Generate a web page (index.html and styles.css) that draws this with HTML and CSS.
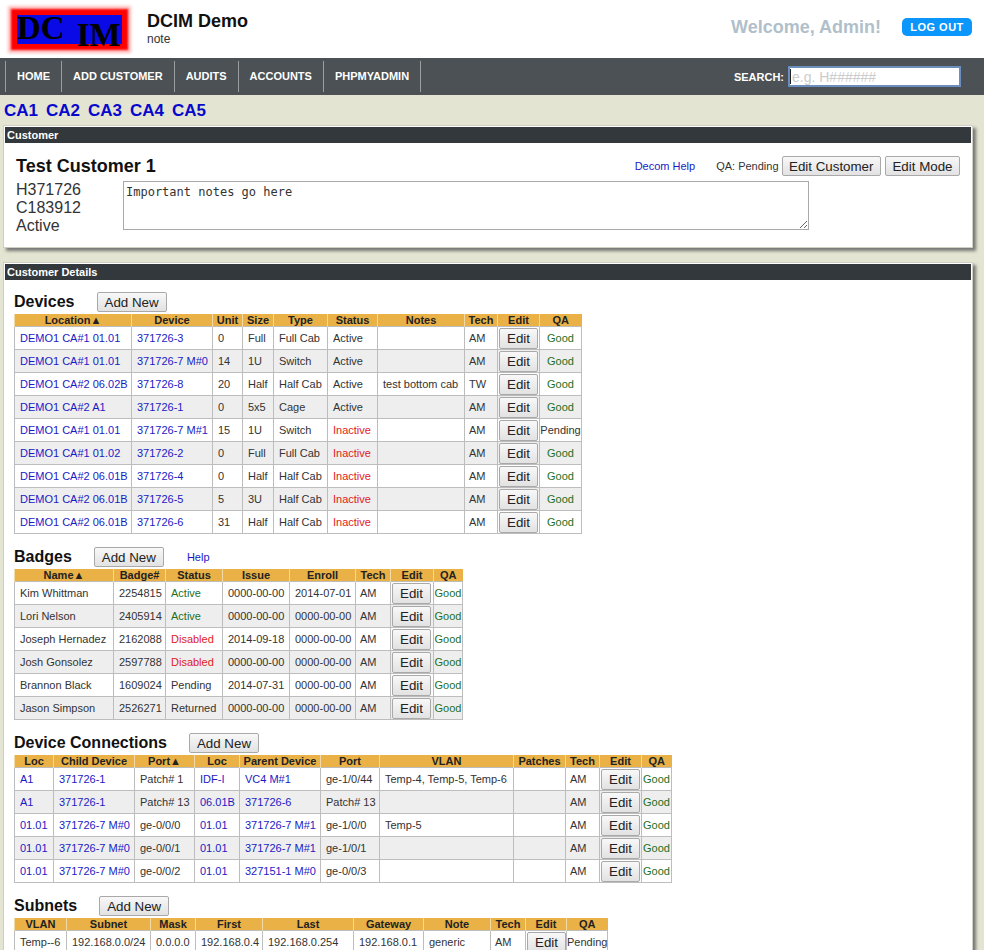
FILE: index.html
```html
<!DOCTYPE html>
<html>
  <head>
    <meta charset="utf-8">
    <title>DCIM Demo</title>
    <link rel="stylesheet" href="styles.css">
  </head>
  <body>
    <header class="top">
      <div class="logo"><span>DC</span><span class="logo-low">IM</span></div>
      <div class="site">
        <h1>DCIM Demo</h1>
        <p>note</p>
      </div>
      <div class="user">
        <span class="welcome">Welcome, Admin!</span>
        <a class="logout" href="#">LOG OUT</a>
      </div>
    </header>

    <nav class="nav">
      <ul>
        <li><a href="#">HOME</a></li>
        <li><a href="#">ADD CUSTOMER</a></li>
        <li><a href="#">AUDITS</a></li>
        <li><a href="#">ACCOUNTS</a></li>
        <li><a href="#">PHPMYADMIN</a></li>
      </ul>
      <form class="search">
        <label for="q">SEARCH:</label>
        <span class="search-box"><input id="q" type="text" placeholder="e.g. H######"></span>
      </form>
    </nav>

    <div class="rooms">
      <a href="#">CA1</a>
      <a href="#">CA2</a>
      <a href="#">CA3</a>
      <a href="#">CA4</a>
      <a href="#">CA5</a>
    </div>

    <section class="panel">
      <div class="panel-title">Customer</div>
      <div class="customer">
        <div class="customer-top">
          <h2>Test Customer 1</h2>
          <a class="decom" href="#">Decom Help</a>
          <span class="qa-state">QA: Pending</span>
          <button>Edit Customer</button>
          <button>Edit Mode</button>
        </div>
        <div class="customer-info">
          <div class="ids">H371726<br>C183912<br>Active</div>
          <textarea>Important notes go here</textarea>
        </div>
      </div>
    </section>

    <section class="panel details">
      <div class="panel-title">Customer Details</div>
      <div class="details-body">

        <div class="block-head">
          <h3>Devices</h3>
          <button>Add New</button>
        </div>
        <table>
          <colgroup>
            <col width="117"><col width="81"><col width="30"><col width="31"><col width="54"><col width="50"><col width="87"><col width="33"><col width="42"><col width="42">
          </colgroup>
          <thead>
            <tr><th>Location▲</th><th>Device</th><th>Unit</th><th>Size</th><th>Type</th><th>Status</th><th>Notes</th><th>Tech</th><th>Edit</th><th>QA</th></tr>
          </thead>
          <tbody>
            <tr><td><a href="#">DEMO1 CA#1 01.01</a></td><td><a href="#">371726-3</a></td><td>0</td><td>Full</td><td>Full Cab</td><td>Active</td><td></td><td>AM</td><td class="act"><button>Edit</button></td><td class="good">Good</td></tr>
            <tr><td><a href="#">DEMO1 CA#1 01.01</a></td><td><a href="#">371726-7 M#0</a></td><td>14</td><td>1U</td><td>Switch</td><td>Active</td><td></td><td>AM</td><td class="act"><button>Edit</button></td><td class="good">Good</td></tr>
            <tr><td><a href="#">DEMO1 CA#2 06.02B</a></td><td><a href="#">371726-8</a></td><td>20</td><td>Half</td><td>Half Cab</td><td>Active</td><td>test bottom cab</td><td>TW</td><td class="act"><button>Edit</button></td><td class="good">Good</td></tr>
            <tr><td><a href="#">DEMO1 CA#2 A1</a></td><td><a href="#">371726-1</a></td><td>0</td><td>5x5</td><td>Cage</td><td>Active</td><td></td><td>AM</td><td class="act"><button>Edit</button></td><td class="good">Good</td></tr>
            <tr><td><a href="#">DEMO1 CA#1 01.01</a></td><td><a href="#">371726-7 M#1</a></td><td>15</td><td>1U</td><td>Switch</td><td class="bad">Inactive</td><td></td><td>AM</td><td class="act"><button>Edit</button></td><td>Pending</td></tr>
            <tr><td><a href="#">DEMO1 CA#1 01.02</a></td><td><a href="#">371726-2</a></td><td>0</td><td>Full</td><td>Full Cab</td><td class="bad">Inactive</td><td></td><td>AM</td><td class="act"><button>Edit</button></td><td class="good">Good</td></tr>
            <tr><td><a href="#">DEMO1 CA#2 06.01B</a></td><td><a href="#">371726-4</a></td><td>0</td><td>Half</td><td>Half Cab</td><td class="bad">Inactive</td><td></td><td>AM</td><td class="act"><button>Edit</button></td><td class="good">Good</td></tr>
            <tr><td><a href="#">DEMO1 CA#2 06.01B</a></td><td><a href="#">371726-5</a></td><td>5</td><td>3U</td><td>Half Cab</td><td class="bad">Inactive</td><td></td><td>AM</td><td class="act"><button>Edit</button></td><td class="good">Good</td></tr>
            <tr><td><a href="#">DEMO1 CA#2 06.01B</a></td><td><a href="#">371726-6</a></td><td>31</td><td>Half</td><td>Half Cab</td><td class="bad">Inactive</td><td></td><td>AM</td><td class="act"><button>Edit</button></td><td class="good">Good</td></tr>
          </tbody>
        </table>

        <div class="block-head">
          <h3>Badges</h3>
          <button>Add New</button>
          <a class="help" href="#">Help</a>
        </div>
        <table>
          <colgroup>
            <col width="99"><col width="52"><col width="57"><col width="67"><col width="66"><col width="35"><col width="43"><col width="29">
          </colgroup>
          <thead>
            <tr><th>Name▲</th><th>Badge#</th><th>Status</th><th>Issue</th><th>Enroll</th><th>Tech</th><th>Edit</th><th>QA</th></tr>
          </thead>
          <tbody>
            <tr><td>Kim Whittman</td><td>2254815</td><td class="good">Active</td><td>0000-00-00</td><td>2014-07-01</td><td>AM</td><td class="act"><button>Edit</button></td><td class="good">Good</td></tr>
            <tr><td>Lori Nelson</td><td>2405914</td><td class="good">Active</td><td>0000-00-00</td><td>0000-00-00</td><td>AM</td><td class="act"><button>Edit</button></td><td class="good">Good</td></tr>
            <tr><td>Joseph Hernadez</td><td>2162088</td><td class="bad">Disabled</td><td>2014-09-18</td><td>0000-00-00</td><td>AM</td><td class="act"><button>Edit</button></td><td class="good">Good</td></tr>
            <tr><td>Josh Gonsolez</td><td>2597788</td><td class="bad">Disabled</td><td>0000-00-00</td><td>0000-00-00</td><td>AM</td><td class="act"><button>Edit</button></td><td class="good">Good</td></tr>
            <tr><td>Brannon Black</td><td>1609024</td><td>Pending</td><td>2014-07-31</td><td>0000-00-00</td><td>AM</td><td class="act"><button>Edit</button></td><td class="good">Good</td></tr>
            <tr><td>Jason Simpson</td><td>2526271</td><td>Returned</td><td>0000-00-00</td><td>0000-00-00</td><td>AM</td><td class="act"><button>Edit</button></td><td class="good">Good</td></tr>
          </tbody>
        </table>

        <div class="block-head">
          <h3>Device Connections</h3>
          <button>Add New</button>
        </div>
        <table>
          <colgroup>
            <col width="39"><col width="81"><col width="60"><col width="45"><col width="81"><col width="59"><col width="134"><col width="52"><col width="34"><col width="42"><col width="30">
          </colgroup>
          <thead>
            <tr><th>Loc</th><th>Child Device</th><th>Port▲</th><th>Loc</th><th>Parent Device</th><th>Port</th><th>VLAN</th><th>Patches</th><th>Tech</th><th>Edit</th><th>QA</th></tr>
          </thead>
          <tbody>
            <tr><td><a href="#">A1</a></td><td><a href="#">371726-1</a></td><td>Patch# 1</td><td><a href="#">IDF-I</a></td><td><a href="#">VC4 M#1</a></td><td>ge-1/0/44</td><td>Temp-4, Temp-5, Temp-6</td><td></td><td>AM</td><td class="act"><button>Edit</button></td><td class="good">Good</td></tr>
            <tr><td><a href="#">A1</a></td><td><a href="#">371726-1</a></td><td>Patch# 13</td><td><a href="#">06.01B</a></td><td><a href="#">371726-6</a></td><td>Patch# 13</td><td></td><td></td><td>AM</td><td class="act"><button>Edit</button></td><td class="good">Good</td></tr>
            <tr><td><a href="#">01.01</a></td><td><a href="#">371726-7 M#0</a></td><td>ge-0/0/0</td><td><a href="#">01.01</a></td><td><a href="#">371726-7 M#1</a></td><td>ge-1/0/0</td><td>Temp-5</td><td></td><td>AM</td><td class="act"><button>Edit</button></td><td class="good">Good</td></tr>
            <tr><td><a href="#">01.01</a></td><td><a href="#">371726-7 M#0</a></td><td>ge-0/0/1</td><td><a href="#">01.01</a></td><td><a href="#">371726-7 M#1</a></td><td>ge-1/0/1</td><td></td><td></td><td>AM</td><td class="act"><button>Edit</button></td><td class="good">Good</td></tr>
            <tr><td><a href="#">01.01</a></td><td><a href="#">371726-7 M#0</a></td><td>ge-0/0/2</td><td><a href="#">01.01</a></td><td><a href="#">327151-1 M#0</a></td><td>ge-0/0/3</td><td></td><td></td><td>AM</td><td class="act"><button>Edit</button></td><td class="good">Good</td></tr>
          </tbody>
        </table>

        <div class="block-head">
          <h3>Subnets</h3>
          <button>Add New</button>
        </div>
        <table>
          <colgroup>
            <col width="52"><col width="84"><col width="45"><col width="67"><col width="91"><col width="70"><col width="67"><col width="35"><col width="41"><col width="41">
          </colgroup>
          <thead>
            <tr><th>VLAN</th><th>Subnet</th><th>Mask</th><th>First</th><th>Last</th><th>Gateway</th><th>Note</th><th>Tech</th><th>Edit</th><th>QA</th></tr>
          </thead>
          <tbody>
            <tr><td>Temp--6</td><td>192.168.0.0/24</td><td>0.0.0.0</td><td>192.168.0.4</td><td>192.168.0.254</td><td>192.168.0.1</td><td>generic</td><td>AM</td><td class="act"><button>Edit</button></td><td>Pending</td></tr>
          </tbody>
        </table>

      </div>
    </section>
  </body>
</html>
```

FILE: styles.css
```css
html, body {
  height: 100%;
  overflow: hidden;
}
body {
  margin: 0;
  background: #e4e4d2;
  font-family: "Liberation Sans", Arial, sans-serif;
  font-size: 11px;
  color: #333;
}
a {
  color: #1a1ac4;
  text-decoration: none;
}
button {
  height: 20px;
  padding: 0 7px;
  border: 1px solid #a9a9a9;
  border-radius: 2px;
  background: linear-gradient(#f8f8f8, #e2e2e2);
  font-family: "Liberation Sans", Arial, sans-serif;
  font-size: 13.33px;
  color: #222;
}

/* header */
.top {
  display: flex;
  height: 58px;
  padding: 15px 12px 0 17px;
  box-sizing: border-box;
  background: #fff;
}
.logo {
  display: flex;
  gap: 12px;
  width: 105px;
  height: 29px;
  background: #0a0ae6;
  box-shadow: 0 0 2px 6px #f00, 0 0 3px 9px #fbb;
  font-family: "Liberation Serif", "Times New Roman", serif;
  font-size: 33px;
  font-weight: bold;
  line-height: 27px;
  color: #000;
}
.logo-low {
  margin-top: 7px;
}
.site {
  margin: -3px 0 0 25px;
}
.site h1 {
  margin: 0;
  font-size: 18px;
  line-height: 18px;
  color: #111;
}
.site p {
  margin: 2px 0 0;
  font-size: 12px;
  line-height: 14px;
}
.user {
  display: flex;
  align-items: center;
  gap: 21px;
  height: 18px;
  margin: 3px 0 0 auto;
}
.welcome {
  font-size: 18px;
  font-weight: bold;
  color: #b0bfca;
}
.logout {
  width: 70px;
  border-radius: 5px;
  background: #0a96fb;
  font-size: 11px;
  font-weight: bold;
  line-height: 18px;
  letter-spacing: 0.5px;
  text-align: center;
  color: #fff;
}

/* nav bar */
.nav {
  display: flex;
  align-items: center;
  justify-content: space-between;
  height: 37px;
  padding: 0 23px 0 5px;
  background: #4b5154;
}
.nav ul {
  display: flex;
  margin: 0;
  padding: 0;
  list-style: none;
  border-right: 1px solid #9a9e9f;
}
.nav li {
  border-left: 1px solid #9a9e9f;
}
.nav li a {
  display: block;
  padding: 0 11px;
  font-weight: bold;
  line-height: 31px;
  color: #fff;
}
.search {
  display: flex;
  align-items: center;
  gap: 4px;
  font-weight: bold;
  color: #fff;
}
.search-box {
  position: relative;
  display: block;
}
.search-box::after {
  content: "";
  position: absolute;
  left: 2px;
  top: 3px;
  width: 1px;
  height: 15px;
  background: #222;
}
.search input {
  display: block;
  width: 173px;
  height: 21px;
  padding: 0 2px;
  box-sizing: border-box;
  border: 2px solid #6c8ebf;
  font-family: "Liberation Sans", Arial, sans-serif;
  font-size: 14px;
}
.search input::placeholder {
  color: #ccc;
}

.rooms {
  display: flex;
  gap: 8px;
  height: 30px;
  padding-left: 4px;
  font-size: 17px;
  font-weight: bold;
  line-height: 32px;
}
.rooms a {
  color: #0808cc;
}

/* panels */
.panel {
  width: 966px;
  margin-left: 3px;
  padding: 1px;
  border: 1px solid #cfcfc4;
  background: #fff;
  box-shadow: 3px 3px 3px #777;
}
.panel-title {
  height: 16px;
  padding-left: 2px;
  background: #33383c;
  font-weight: bold;
  line-height: 16px;
  color: #fff;
}
.customer {
  padding: 13px 11px 11px 11px;
}
.customer-top {
  display: flex;
  align-items: center;
  height: 20px;
}
.customer-top h2 {
  margin: 0;
  font-size: 18px;
  color: #111;
}
.customer-top button {
  padding: 0 6.5px;
}
.decom {
  margin-left: auto;
}
.qa-state {
  margin: 0 3px 0 21px;
}
.customer-top button + button {
  margin-left: 4px;
}
.customer-info {
  display: flex;
  margin-top: 5px;
}
.ids {
  width: 107px;
  font-size: 16px;
  line-height: 18px;
}
.customer-info textarea {
  display: block;
  width: 686px;
  height: 49px;
  padding: 2px;
  box-sizing: border-box;
  border: 1px solid #a9a9a9;
  font-family: "DejaVu Sans Mono", Consolas, monospace;
  font-size: 12px;
  line-height: 16px;
  color: #333;
}
.details {
  margin-top: 14px;
  height: 800px;
}
.details-body {
  padding: 12px 0 0 9px;
}
.block-head {
  display: flex;
  align-items: center;
  gap: 22px;
  height: 20px;
  margin-bottom: 2px;
}
.block-head h3 {
  margin: 0;
  font-size: 16px;
  color: #111;
}
.help {
  margin-left: 1px;
}

/* tables */
table {
  width: 0;
  table-layout: fixed;
  border-collapse: collapse;
  margin-bottom: 13px;
}
th {
  height: 12px;
  padding: 0;
  border-left: 1px solid #f3d9a6;
  background: #e9b146;
  font-size: 11px;
  line-height: 12px;
  color: #222;
}
td {
  height: 22px;
  padding: 0 0 0 5px;
  border: 1px solid #bdbdbd;
  font-size: 11px;
  white-space: nowrap;
}
tbody tr:nth-child(even) td {
  background: #eee;
}
td:nth-last-child(3) {
  padding-left: 4px;
}
td.act {
  padding: 0 0 0 1px;
}
td.act button {
  display: block;
  width: 39px;
  height: 21px;
  padding: 0;
}
td:last-child {
  padding: 0;
  text-align: center;
}
.good {
  color: #1f6f1f;
}
.bad {
  color: #e01b1b;
}
```
